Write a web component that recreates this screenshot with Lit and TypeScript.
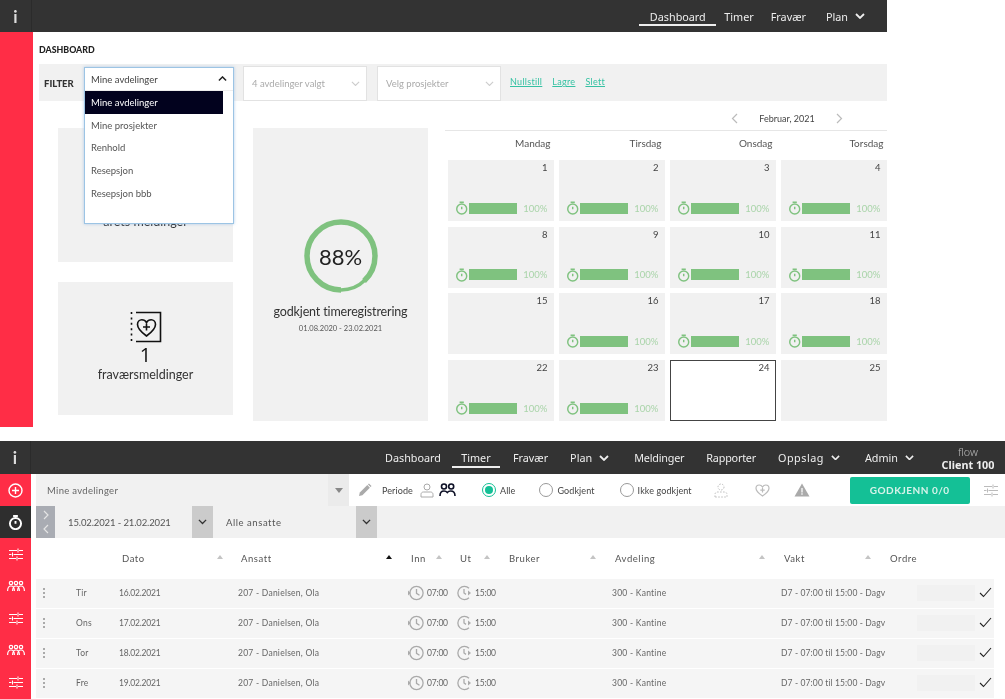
import { LitElement, html, css } from "lit";
import { customElement } from "lit/decorators.js";

const chevD = (w = 10, c = "currentColor", sw = 1.8) => html`<svg width=${w} height=${w * 0.6} viewBox="0 0 10 6" fill="none" stroke=${c} stroke-width=${sw}><path d="M1 1l4 4 4-4"/></svg>`;
const chevU = (w = 10, c = "currentColor", sw = 1.8) => html`<svg width=${w} height=${w * 0.6} viewBox="0 0 10 6" fill="none" stroke=${c} stroke-width=${sw}><path d="M1 5l4-4 4 4"/></svg>`;
const timer = (s = 14, c = "#7fc27f", sw = 1.5) => html`<svg width=${s} height=${s} viewBox="0 0 14 14" fill="none" stroke=${c} stroke-width=${sw}><circle cx="7" cy="8" r="5.2"/><path d="M4.800 1h4.400M7 5.600v2.600"/></svg>`;
const sliders = (c = "#fff") => html`<svg width="14" height="13" viewBox="0 0 14 13" fill="none" stroke=${c} stroke-width="1"><path d="M0 2.500h8M10 2.500h4M0 6.500h2.500M4.500 6.500h9.500M0 10.500h7M9 10.500h5M9 .5v4M3.500 4.500v4M8 8.500v4"/></svg>`;
const people = (c = "#fff") => html`<svg width="18" height="13" viewBox="0 0 18 13" fill="none" stroke=${c} stroke-width="1.200"><circle cx="4" cy="3" r="1.700"/><circle cx="9" cy="3" r="1.700"/><circle cx="14" cy="3" r="1.700"/><path d="M.6 11c0-3.400 1.500-5 3.400-5s3.400 1.600 3.400 5M5.600 11c0-3.400 1.500-5 3.400-5s3.400 1.600 3.400 5M10.600 11c0-3.400 1.500-5 3.400-5s3.400 1.600 3.400 5"/></svg>`;
const sort = (dark = false) => html`<i class=${dark ? "tri dark" : "tri"}></i>`;
const clockIn = html`<svg width="17" height="16" viewBox="0 0 17 16" fill="none" stroke="#aaa" stroke-width="1.300"><circle cx="9.500" cy="8" r="6.600"/><path d="M9.500 4v4.400l3 1.800"/><path d="M1 5.500l2.600 2.500L1 10.500z" fill="#aaa" stroke="none"/></svg>`;
const clockOut = html`<svg width="15" height="16" viewBox="0 0 15 16" fill="none" stroke="#aaa" stroke-width="1.300"><path d="M12 3.200A6.600 6.600 0 1 0 12 12.800"/><path d="M7 4v4l2 1.400"/><path d="M11 5.500l3 2.500-3 2.500z" fill="#aaa" stroke="none"/></svg>`;

const MENU = ["Mine avdelinger", "Mine prosjekter", "Renhold", "Resepsjon", "Resepsjon bbb"];
const DAYS = ["Mandag", "Tirsdag", "Onsdag", "Torsdag"];
const CAL = [1, 2, 3, 4, 8, 9, 10, 11, 15, 16, 17, 18, 22, 23, 24, 25];
const ROWS = [["Tir", "16.02.2021"], ["Ons", "17.02.2021"], ["Tor", "18.02.2021"], ["Fre", "19.02.2021"]];
const SIDE = ["plus", "timer", "sliders", "people", "sliders", "people", "sliders"];
const PCT = 0.88;
const CIRC = 2 * Math.PI * 34;

@customElement("app-root")
export class AppRoot extends LitElement {
  static styles = css`
    :host { display: block; width: 1005px; height: 699px; overflow: hidden; background: #fff; font-family: "Lato", "Liberation Sans", sans-serif; color: #444; filter: blur(0.35px); }
    * { box-sizing: border-box; }
    .top { width: 887px; height: 427px; display: grid; grid-template-rows: 32px 1fr; grid-template-columns: 33px minmax(0, 1fr); margin-bottom: 14px; }
    .hdr { grid-column: 1 / -1; background: #333; display: flex; align-items: stretch; color: #eee; font-size: 10.8px; font-family: "Noto Sans", sans-serif; }
    .info { width: 32px; display: grid; place-items: center; font-size: 17px; font-weight: 700; color: #ddd; font-family: "Lato", sans-serif; border-right: 1px solid #2b2b2b; flex: none; }
    .spacer { flex: 1; }
    .nav { display: flex; align-items: center; position: relative; gap: 7px; white-space: nowrap; }
    .nav.on::after { content: ""; position: absolute; left: 0; right: 0; bottom: 6px; height: 2px; background: #eee; }
    .nav.wide { letter-spacing: .5px; }
    .nav.tight { letter-spacing: -.2px; }
    .red { background: #ff2d46; }
    .main { position: relative; padding: 0 0 0 6px; }
    .title { height: 32px; padding-top: 12px; font-size: 8.8px; font-weight: 900; color: #222; }
    .filter { height: 37px; background: #f1f1f1; display: flex; align-items: center; font-size: 9.5px; }
    .flabel { width: 45px; padding: 1px 0 0 5px; font-weight: 900; color: #333; font-size: 9.5px; }
    .sel { height: 35px; margin-top: 2px; background: #fff; border: 1px solid #e2e2e2; display: flex; align-items: center; justify-content: space-between; padding: 0 6px 0 8px; color: #aaa; font-size: 9.5px; }
    .links { display: flex; gap: 10px; margin-left: 9px; color: #35c2a3; text-decoration: underline; margin-top: -2px; font-size: 9px; letter-spacing: .3px; }
    .dd { position: absolute; left: 51px; top: 35px; width: 150px; height: 157px; background: #fff; border: 1px solid #9cc4e4; box-shadow: 0 0 3px rgba(120,170,220,.55); font-size: 9.5px; color: #555; z-index: 2; }
    .ddh { height: 23px; padding: 0 6px; display: flex; align-items: center; justify-content: space-between; color: #444; border-bottom: 1px solid #eee; }
    .ddi { height: 22.700px; padding: 0 6px; display: flex; align-items: center; }
    .ddi.first { background: #02021e; color: #fff; width: 138px; }
    .content { display: grid; grid-template-columns: 175px 175px 442px; column-gap: 20px; margin: 27px 0 0 19px; height: 287px; }
    .col { display: grid; grid-template-rows: 134px 133px; row-gap: 20px; }
    .card { background: #f1f1f1; display: flex; flex-direction: column; align-items: center; color: #333; }
    .c1 { justify-content: flex-end; padding-bottom: 33px; font-size: 12.5px; }
    .c2 { padding-top: 29px; }
    .c2 .n { font-size: 20px; line-height: 24px; color: #111; font-family: "Open Sans", sans-serif; }
    .c2 .l, .c3 .l { font-size: 12.500px; }
    .c2 .l { line-height: 16px; }
    .c3 { padding-top: 91px; }
    .ring { width: 74px; height: 74px; position: relative; display: grid; place-items: center; font-size: 22px; color: #222; }
    .ring svg { position: absolute; inset: 0; }
    .c3 .l { margin-top: 11px; letter-spacing: -.15px; }
    .c3 .d { font-size: 7.500px; color: #555; margin-top: 5px; }
    .cal { width: 442px; margin: -17px 0 0 -3px; }
    .mon { height: 20px; border-bottom: 1px solid #e6e6e6; display: flex; align-items: center; font-size: 9px; color: #444; padding: 0 44px 5px 286px; justify-content: space-between; }
    .dow { display: grid; grid-template-columns: repeat(4, 105.500px); column-gap: 5.500px; padding-left: 3px; height: 29px; align-items: center; font-size: 10px; color: #555; }
    .dow div { text-align: right; padding-right: 3px; margin-top: -5px; }
    .grid { display: grid; grid-template-columns: repeat(4, 105.500px); grid-template-rows: repeat(4, 61px); gap: 5.700px 5.500px; padding-left: 3px; }
    .cell { background: #f1f1f1; padding: 2px 6px 0 0; text-align: right; font-size: 9.500px; color: #444; display: flex; flex-direction: column; justify-content: space-between; }
    .cell.today { background: #fff; border: 1px solid #444; padding: 1px 5px 0 0; }
    .pb { display: flex; align-items: center; padding: 0 0 6px 7px; gap: 1px; color: #a9d4a9; font-size: 9.500px; }
    .pb b { width: 50px; height: 11px; background: #7fc27f; margin-right: 5px; }
    .bot { height: 258px; display: grid; grid-template-columns: 31px minmax(0, 1fr); grid-template-rows: 33px 1fr; }
    .client { width: 74px; margin-left: 17px; text-align: center; line-height: 13px; align-self: center; }
    .client div:first-child { font-weight: 300; color: #bbb; }
    .client div:last-child { font-weight: 700; }
    .side { background: #ff2d46; display: grid; grid-auto-rows: 32px; }
    .side div { display: grid; place-items: center; }
    .side div.act { background: #2e2e2e; }
    .pane { padding-left: 5px; min-width: 0; font-size: 9.500px; }
    .r1 { height: 32px; display: flex; align-items: center; }
    .sa { width: 313px; height: 32px; background: #f1f1f1; display: flex; align-items: center; justify-content: space-between; padding-left: 11px; color: #666; letter-spacing: .3px; font-size: 9.500px; }
    .sa span.b { width: 21px; height: 32px; background: #ebebeb; display: grid; place-items: center; }
    .drop { width: 0; height: 0; border: 4px solid transparent; border-top: 5px solid #888; border-bottom: 0; }
    .ic { display: flex; align-items: center; }
    .tool { display: flex; align-items: center; color: #444; letter-spacing: .1px; font-size: 9px; white-space: nowrap; }
    .rad { width: 14px; height: 14px; border: 1px solid #999; border-radius: 50%; display: grid; place-items: center; flex: none; margin-right: 4px; }
    .rad.on { border-color: #14c096; }
    .rad.on::after { content: ""; width: 8px; height: 8px; border-radius: 50%; background: #14c096; }
    .btn { width: 120px; height: 27px; background: #14c096; border-radius: 2px; color: #d8f3ea; display: grid; place-items: center; font-size: 10px; letter-spacing: .5px; font-weight: 700; margin-left: 40px; }
    .r2 { height: 32px; background: #f1f1f1; display: flex; align-items: stretch; color: #555; letter-spacing: .55px; font-size: 9.500px; }
    .pg { width: 19px; background: #a9acb3; display: flex; flex-direction: column; justify-content: space-around; align-items: center; padding: 2px 0; }
    .blk { width: 21px; background: #cbcbcb; display: grid; place-items: center; flex: none; color: #333; }
    .txt { display: flex; align-items: center; white-space: nowrap; }
    .txt.dates { letter-spacing: -.12px; }
    .thead { height: 41px; display: grid; align-items: center; grid-template-columns: 86px 94.500px 24.500px 144.500px 25.500px 25px 24px 24px 25px 81px 25px 144px 25px 81px 25px 1fr; color: #555; letter-spacing: .55px; font-size: 9.500px; width: 969px; white-space: nowrap; }
    .tri { display: block; width: 0; height: 0; border: 3.500px solid transparent; border-bottom: 4px solid #c4c4c4; border-top: 0; margin-top: -3px; }
    .tri.dark { border-bottom-color: #111; }
    .row { display: grid; grid-template-columns: 40px 43px 119px 169px 50px 155px 169px 136px 58px 1fr; width: 958px; height: 29px; margin-bottom: 1px; padding-bottom: 2px; background: #f5f5f5; align-items: center; color: #666; font-size: 8.500px; letter-spacing: .25px; white-space: nowrap; }
    .dt { letter-spacing: -.2px; }
    .vk { letter-spacing: .12px; }
    .dots { margin-left: 7px; display: flex; flex-direction: column; gap: 2px; }
    .dots i { width: 2px; height: 2px; background: #aaa; display: block; }
    .tm { display: flex; align-items: center; gap: 3px; letter-spacing: -.2px; }
    .ord { height: 16px; background: #f1f1f1; }
    .chk { margin-left: 4px; display: block; }
  `;

  render() {
    return html`
      <section class="top">
        <header class="hdr">
          <div class="info">i</div><div class="spacer"></div>
          <div class="nav on" style="width:77px;justify-content:center">Dashboard</div>
          <div class="nav" style="margin-left:8px">Timer</div>
          <div class="nav" style="margin-left:17px">Fravær</div>
          <div class="nav" style="margin:0 22px 0 20px">Plan ${chevD(10)}</div>
        </header>
        <aside class="red"></aside>
        <main class="main">
          <div class="title">DASHBOARD</div>
          <div class="filter">
            <div class="flabel">FILTER</div>
            <div style="width:149px"></div>
            <div class="sel" style="width:124px;margin-left:10px">4 avdelinger valgt ${chevD(9, "#ccc", 1.2)}</div>
            <div class="sel" style="width:124px;margin-left:10px">Velg prosjekter ${chevD(9, "#ccc", 1.2)}</div>
            <div class="links"><span>Nullstill</span><span>Lagre</span><span>Slett</span></div>
          </div>
          <div class="dd">
            <div class="ddh">Mine avdelinger ${chevU(9, "#222", 1.6)}</div>
            ${MENU.map((m, i) => html`<div class=${i === 0 ? "ddi first" : "ddi"}>${m}</div>`)}
          </div>
          <div class="content">
            <div class="col">
              <div class="card c1">årets meldinger</div>
              <div class="card c2">
                <svg width="32" height="32" viewBox="0 0 32 32" fill="none" stroke="#111" stroke-width="1.600">
                  <path d="M6 1.500h24.500v29H6"/><path d="M1.500 1v30" stroke-dasharray="2 3.400"/>
                  <path d="M16.500 25C11 21 7.500 17.500 7.500 13.500c0-3 2-4.800 4.300-4.800 2 0 3.700 1 4.700 2.800 1-1.800 2.700-2.800 4.700-2.800 2.300 0 4.300 1.800 4.300 4.800 0 4-3.500 7.500-9 11.500z"/>
                  <path d="M16.500 12.500v7M13 16h7"/>
                </svg>
                <div class="n">1</div>
                <div class="l">fraværsmeldinger</div>
              </div>
            </div>
            <div class="card c3">
              <div class="ring">
                <svg viewBox="0 0 74 74" fill="none" stroke="#7fc27f">
                  <circle cx="37" cy="37" r="34" stroke-width="3.500"/>
                  <circle cx="37" cy="37" r="34" stroke-width="5.500" transform="rotate(90 37 37)" stroke-dasharray="${CIRC * PCT} ${CIRC}"/>
                </svg>
                88%
              </div>
              <div class="l">godkjent timeregistrering</div>
              <div class="d">01.08.2020 - 23.02.2021</div>
            </div>
            <div class="cal">
              <div class="mon"><svg width="7" height="11" viewBox="0 0 7 11" fill="none" stroke="#bbb" stroke-width="1.200"><path d="M6 1L1.500 5.500 6 10"/></svg><span>Februar, 2021</span><svg width="7" height="11" viewBox="0 0 7 11" fill="none" stroke="#bbb" stroke-width="1.200"><path d="M1 1l4.500 4.500L1 10"/></svg></div>
              <div class="dow">${DAYS.map((d) => html`<div>${d}</div>`)}</div>
              <div class="grid">
                ${CAL.map((n) => html`<div class=${n === 24 ? "cell today" : "cell"}>
                  <span>${n}</span>
                  ${n === 15 || n === 24 || n === 25 ? "" : html`<div class="pb">${timer(14)}<b></b>100%</div>`}
                </div>`)}
              </div>
            </div>
          </div>
        </main>
      </section>

      <section class="bot">
        <header class="hdr">
          <div class="info" style="width:31px">i</div><div class="spacer"></div>
          <div class="nav">Dashboard</div>
          <div class="nav on" style="margin-left:11px;width:48px;justify-content:center">Timer</div>
          <div class="nav" style="margin-left:13px">Fravær</div>
          <div class="nav" style="margin-left:22px">Plan ${chevD(10)}</div>
          <div class="nav tight" style="margin-left:25px">Meldinger</div>
          <div class="nav tight" style="margin-left:22px">Rapporter</div>
          <div class="nav wide" style="margin-left:22px">Oppslag ${chevD(9)}</div>
          <div class="nav" style="margin-left:25px">Admin ${chevD(9)}</div>
          <div class="client"><div>flow</div><div>Client 100</div></div>
        </header>
        <aside class="side">
          ${SIDE.map((s) => html`<div class=${s === "timer" ? "act" : ""}>
            ${s === "plus" ? html`<svg width="15" height="15" viewBox="0 0 15 15" fill="none" stroke="#fff" stroke-width="1.400"><circle cx="7.500" cy="7.500" r="6.500"/><path d="M7.500 4v7M4 7.500h7"/></svg>` : s === "timer" ? timer(15, "#fff", 1.8) : s === "sliders" ? sliders() : people()}
          </div>`)}
        </aside>
        <div class="pane">
          <div class="r1">
            <div class="sa">Mine avdelinger<span class="b"><i class="drop"></i></span></div>
            <svg style="margin-left:9px" width="14" height="14" viewBox="0 0 14 14" fill="#aaa"><path d="M1 13l.8-3.400 7.500-7.500 2.600 2.600-7.500 7.500z"/><path d="M10 1.400l.9-.9 2.600 2.600-.9.9z"/></svg>
            <div class="tool" style="margin-left:10px">Periode</div>
            <svg style="margin-left:7px" width="14" height="15" viewBox="0 0 14 15" fill="none" stroke="#aaa"><circle cx="7" cy="4" r="3"/><path d="M1 14v-2.500c0-1.500 1-2.500 2.500-2.500h7c1.500 0 2.500 1 2.500 2.500V14z"/></svg>
            <svg style="margin-left:5px" width="17" height="14" viewBox="0 0 17 14" fill="none" stroke="#0d1026" stroke-width="1.600"><circle cx="5" cy="3.500" r="2.500"/><circle cx="12.200" cy="3.500" r="2.500"/><path d="M1 13c0-3.500 1.500-5 4-5 1.500 0 2.500.5 3.300 1.500.8-1 1.900-1.500 3.400-1.500 2.500 0 4.300 1.500 4.300 5"/></svg>
            <div class="tool" style="margin-left:26px"><span class="rad on"></span>Alle</div>
            <div class="tool" style="margin-left:24px"><span class="rad"></span>Godkjent</div>
            <div class="tool" style="margin-left:25px"><span class="rad"></span>Ikke godkjent</div>
            <svg style="margin-left:22px" width="14" height="15" viewBox="0 0 14 15" fill="none" stroke="#bbb" stroke-dasharray="1.500 1.500"><circle cx="7" cy="4" r="3"/><path d="M1 14v-2.500c0-1.500 1-2.500 2.500-2.500h7c1.500 0 2.500 1 2.500 2.500V14z"/></svg>
            <svg style="margin-left:27px" width="15" height="13" viewBox="0 0 15 13" fill="none" stroke="#bbb" stroke-width="1.200"><path d="M7.500 12C3 9 1 6.800 1 4.300 1 2.300 2.400 1 4.200 1 5.600 1 6.800 1.800 7.500 3c.7-1.200 1.900-2 3.300-2C12.600 1 14 2.300 14 4.300 14 6.800 12 9 7.500 12z"/><path d="M7.500 4v4.500M5.300 6.200h4.400"/></svg>
            <svg style="margin-left:24px" width="16" height="14" viewBox="0 0 16 14"><path d="M8 .5L15.500 13.500H.5z" fill="#aaa"/><path d="M7.300 5h1.400v4.500H7.300zM7.300 10.300h1.400v1.500H7.300z" fill="#f6f6f6"/></svg>
            <div class="btn">GODKJENN 0/0</div>
            <span class="ic" style="margin-left:14px">${sliders("#bbb")}</span>
          </div>
          <div class="r2">
            <div class="pg">
              <svg width="6" height="10" viewBox="0 0 6 10" fill="none" stroke="#e4e4e4" stroke-width="1.200"><path d="M1 1l4 4-4 4"/></svg>
              <svg width="6" height="10" viewBox="0 0 6 10" fill="none" stroke="#e4e4e4" stroke-width="1.200"><path d="M5 1L1 5l4 4"/></svg>
            </div>
            <div class="txt dates" style="width:137px;padding-left:13px">15.02.2021 - 21.02.2021</div>
            <div class="blk">${chevD(9, "#333", 1.5)}</div>
            <div class="txt" style="width:143px;padding-left:13px">Alle ansatte</div>
            <div class="blk">${chevD(9, "#333", 1.5)}</div>
          </div>
          <div class="thead">
            <span></span>
            <span>Dato</span><span>${sort()}</span>
            <span>Ansatt</span><span>${sort(true)}</span>
            <span>Inn</span><span>${sort()}</span>
            <span>Ut</span><span>${sort()}</span>
            <span>Bruker</span><span>${sort()}</span>
            <span>Avdeling</span><span>${sort()}</span>
            <span>Vakt</span><span>${sort()}</span>
            <span>Ordre</span>
          </div>
          ${ROWS.map(([d, dt]) => html`<div class="row">
            <span class="dots"><i></i><i></i><i></i></span>
            <span>${d}</span><span class="dt">${dt}</span><span>207 - Danielsen, Ola</span>
            <span class="tm">${clockIn}07:00</span><span class="tm">${clockOut}15:00</span>
            <span>300 - Kantine</span>
            <span class="vk">D7 - 07:00 til 15:00 - Dagv</span>
            <span class="ord"></span>
            <svg class="chk" width="13" height="11" viewBox="0 0 13 11" fill="none" stroke="#222" stroke-width="1.100"><path d="M1 6l3.500 3.500L12 1"/></svg>
          </div>`)}
        </div>
      </section>
    `;
  }
}
